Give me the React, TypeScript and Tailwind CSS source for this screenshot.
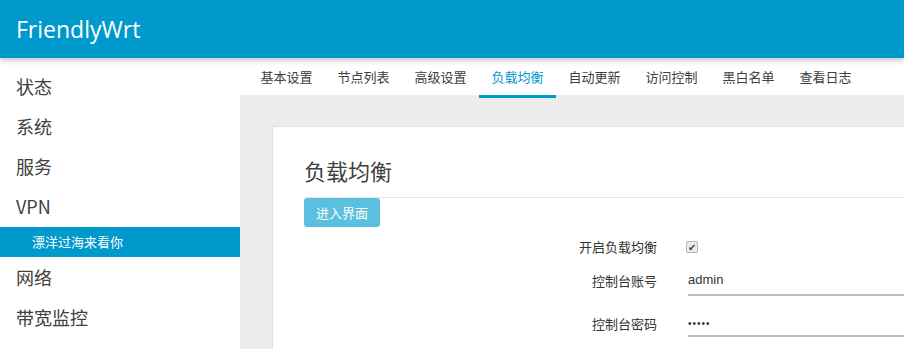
import React from 'react';

const cjk = { fontFamily: '"Noto Sans CJK SC", "Open Sans", sans-serif' };

const menu = ['状态', '系统', '服务', 'VPN'];
const menuBottom = ['网络', '带宽监控'];
const tabs = ['基本设置', '节点列表', '高级设置', '负载均衡', '自动更新', '访问控制', '黑白名单', '查看日志'];

const App: React.FC = () => {
    return (
        <div className="w-[904px] h-[349px] overflow-hidden bg-white text-[#333]" style={cjk}>
            {/* Top bar */}
            <header className="relative z-20 h-[58px] bg-[#0099cc] flex items-center pl-[16px] shadow-[0_2px_6px_rgba(0,0,0,0.25)]">
                <span className="text-white text-[23px] leading-none" style={{ fontFamily: '"Open Sans", "Noto Sans", sans-serif' }}>
                    FriendlyWrt
                </span>
            </header>

            <div className="flex h-[291px]">
                {/* Sidebar */}
                <nav className="w-[240px] shrink-0 pt-[8px] bg-white">
                    {menu.map((m) => (
                        <div key={m} className="h-[40px] flex items-center pl-[16px] text-[18px] text-[#404040]">{m}</div>
                    ))}
                    <div className="h-[30px] mt-[1px] flex items-center pl-[32px] bg-[#0099cc] text-white text-[13px]">
                        漂洋过海来看你
                    </div>
                    {menuBottom.map((m) => (
                        <div key={m} className="h-[40px] flex items-center pl-[16px] text-[18px] text-[#404040]">{m}</div>
                    ))}
                </nav>

                {/* Main */}
                <main className="flex-1 bg-[#ececec] flex flex-col min-w-0">
                    <div className="relative z-10 h-[37px] bg-white flex items-center pl-[8px]">
                        {tabs.map((t, i) => (
                            <div
                                key={t}
                                className={`relative h-full flex items-center px-[12.5px] text-[13px] ${i === 3 ? 'text-[#0099cc]' : 'text-[#404040]'}`}
                            >
                                {t}
                                {i === 3 && <span className="absolute left-0 right-0 -bottom-[3px] h-[3px] bg-[#0099cc]" />}
                            </div>
                        ))}
                    </div>

                    <div className="flex-1 pt-[31px] pl-[32px]">
                        <div className="h-full bg-white border-l border-t border-[#e0e0e0] pl-[31px] pt-[31px]">
                            <h2 className="text-[22px] leading-[22px] pt-[1px] text-[#404040] h-[39px]">负载均衡</h2>
                            <div className="border-t border-[#e6e6e6]">
                                <button className="h-[29px] px-[12px] rounded-[3px] bg-[#5bc0de] text-white text-[13px]">
                                    进入界面
                                </button>
                            </div>

                            <div className="flex items-center h-[30px] mt-[5px]">
                                <div className="w-[353px] text-right text-[13px] text-[#333]">开启负载均衡</div>
                                <div className="ml-[29px] w-[12px] h-[12px] border border-[#b5b5b5] bg-[#ececec] rounded-[2px] flex items-center justify-center text-[10px] leading-none text-[#444]">
                                    ✔
                                </div>
                            </div>

                            <div className="flex items-end h-[29px] mt-[5px]">
                                <div className="w-[353px] text-right text-[13px] text-[#333] pb-[6px]">控制台账号</div>
                                <div className="ml-[31px] flex-1 border-b-2 border-[#bdbdbd] pb-[5px] text-[13px] text-[#333]" style={{ fontFamily: '"Liberation Sans", Arial, sans-serif' }}>
                                    admin
                                </div>
                            </div>

                            <div className="flex items-end h-[29px] mt-[12px]">
                                <div className="w-[353px] text-right text-[13px] text-[#333] pb-[4px]">控制台密码</div>
                                <div className="ml-[31px] flex-1 border-b-2 border-[#bdbdbd] pb-[4px] text-[10px] leading-[14px] tracking-[1px] text-[#333]" style={{ fontFamily: '"Liberation Sans", Arial, sans-serif' }}>
                                    •••••
                                </div>
                            </div>
                        </div>
                    </div>
                </main>
            </div>
        </div>
    );
};

export default App;
